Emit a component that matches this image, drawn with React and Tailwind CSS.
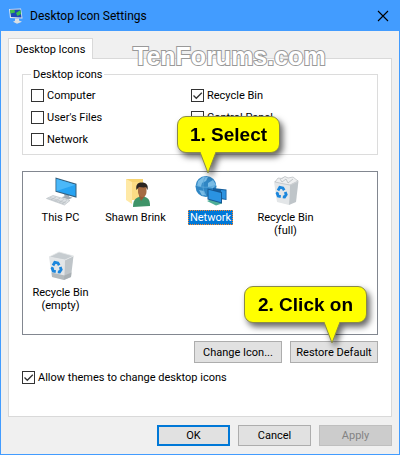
import { useState } from 'react';

function PcIcon() {
    return (
        <svg viewBox="0 0 32 32" className="size-8" aria-hidden="true">
            <path d="M19 17l5 1.500v2l3.500 1.200-4 1.800-7-2.300 3-1z" fill="#a3adb5" />
            <path d="M10.500 1.500l21 6.300v14l-21-6z" fill="#35607f" />
            <path d="M11.500 3l19 5.700v11.600l-19-5.400z" fill="#27a3f2" />
            <path d="M11.500 3l19 5.700-19 6.200z" fill="#4bb8f9" />
            <path d="M1.500 22.500L8 19.500l17 5-5.500 4.500z" fill="#dfe3e6" stroke="#b3babf" strokeWidth=".6" />
            <path d="M5 21.500l16 5.500M3.500 22.500l16 5.500M11 21l-5 2.800M15 22.200l-5 3M19 23.400l-5 3M22 24.500l-5 3" stroke="#b3babf" strokeWidth=".6" />
        </svg>
    );
}

function UserIcon() {
    return (
        <svg viewBox="0 0 32 32" className="size-8" aria-hidden="true">
            <path d="M6 3h17v21H10z" fill="#f7d472" />
            <path d="M6 3l6 3v22l-6-4z" fill="#ffe9a6" />
            <path d="M12 6h10v18H12z" fill="#fbdc85" />
            <path d="M13 31c0-6 2-9 6-10h6c4 1 5 4 5 9z" fill="#3f9468" />
            <path d="M19 20l2 5 4-5v-3h-6z" fill="#945c37" />
            <path d="M18 10h8.500v6c0 3-2 5-4 5s-4.500-2-4.500-5z" fill="#a56b42" />
            <path d="M16.500 14c-1-5 1-7.500 5-7.500 5 0 7 2.500 6 7.500l-1.500-3c-2 1-5 0-7 0z" fill="#2b2522" />
        </svg>
    );
}

function NetworkIcon() {
    return (
        <svg viewBox="0 0 32 32" className="size-8" aria-hidden="true">
            <circle cx="11" cy="10.500" r="10.500" fill="#2f86c4" />
            <path d="M3 5l5-4h5l-2 4-4 2-1 4-4-1zM13 7l5-3 3 5-3 3-5-1zM4 14l5 1 2 4-4 .5z" fill="#79bce6" />
            <path d="M1 9c5 3 14 3 20 0M11 0c-4 5-4 14 0 20" fill="none" stroke="#5aa7d9" strokeWidth=".8" />
            <path d="M12 25l5-2 10 3v1.500l-6 2z" fill="#4fae98" />
            <path d="M18 12l13.500 1.500v10.500L18 22z" fill="#155f9e" />
            <path d="M26 14l4.700.5v8.500L26 22z" fill="#2d93e0" />
            <path d="M12.500 12.500L27 16v11.500L12.500 23.500z" fill="#165893" />
            <path d="M13.500 13.800L26 16.900v9.300l-12.500-3.400z" fill="#2a93e2" />
        </svg>
    );
}

function BinIcon({ full }) {
    return (
        <svg viewBox="0 0 32 32" className="size-8" aria-hidden="true">
            <path d="M4 6l16 3-1 20-12-3z" fill="#e3e6e8" />
            <path d="M20 9l8.500-4-2.500 21-7 3z" fill="#bfc5c9" />
            <path d="M4 6l10-5 14.500 4-8.500 4z" fill="#c6ccd0" stroke="#e6e9ea" strokeWidth=".8" />
            {full ? (
                <>
                    <path d="M5 6l3-4 4 .5 3-2 3 1.500 5-1 5 4-4 2-4 2-8-1.500z" fill="#eeeff0" stroke="#aeb4b8" strokeWidth=".6" />
                    <path d="M10 3l2 3 4-3 2 4 5-4" fill="none" stroke="#aeb4b8" strokeWidth=".7" />
                </>
            ) : (
                <path d="M6.500 21.500l13 3 7-3-.5 4.500-7 3-12-3z" fill="#a0a7ab" opacity=".7" />
            )}
            <g fill="none" stroke="#1b86dc" strokeWidth="2.800">
                <path d="M8 14.500l1.800-3.200 3 .6 1.400 2.400" />
                <path d="M15.200 16l1 2.600-1.600 2.400-1.800-.2" />
                <path d="M10.800 20.600l-2.600-.5-1-2.600.8-1.200" />
            </g>
        </svg>
    );
}

function AppIcon() {
    return (
        <svg viewBox="0 0 16 16" className="size-4" aria-hidden="true">
            <path d="M1 1l12-.5 1.500 10L2 10z" fill="#dfe8ef" />
            <path d="M2 1.800l10.500-.3 1 8L3 9z" fill="#1d49b5" />
            <path d="M2 2l4.500 0 .5 2.500-4.500 1zM8 5l4.500-3 .5 4-3.500 2z" fill="#3fc04a" />
            <path d="M7 10.500h4v2l3 1.200-5 2-4-2 2-1z" fill="#dadfe2" />
        </svg>
    );
}

const icons = [
    { id: 'pc', name: 'This PC', icon: <PcIcon /> },
    { id: 'user', name: 'Shawn Brink', icon: <UserIcon /> },
    { id: 'network', name: 'Network', icon: <NetworkIcon />, hint: '1. Select' },
    { id: 'full', name: 'Recycle Bin (full)', icon: <BinIcon full /> },
    { id: 'empty', name: 'Recycle Bin (empty)', icon: <BinIcon /> },
];

function CheckBox({ label, defaultChecked = false }) {
    return (
        <label className="flex items-center gap-[3px]">
            <span className="grid">
                <input
                    type="checkbox"
                    defaultChecked={defaultChecked}
                    className="peer col-start-1 row-start-1 size-[13px] appearance-none border border-[#333] bg-white"
                />
                <svg viewBox="0 0 13 13" className="pointer-events-none invisible col-start-1 row-start-1 size-[13px] peer-checked:visible" aria-hidden="true">
                    <path d="M2.500 6.500l2.800 2.800 5.500-5.600" fill="none" stroke="#333" strokeWidth="1.300" />
                </svg>
            </span>
            {label}
        </label>
    );
}

// Yellow speech bubble, placed by its parent; the tail hangs left or right of the middle
function Callout({ text, tail, className }) {
    return (
        <span className={`pointer-events-none absolute z-10 flex flex-col drop-shadow-[3px_4px_3px_rgba(0,0,0,0.6)] ${className}`}>
            <span className="flex h-[37px] w-full items-center justify-center rounded-[9px] border border-[#8a8a4a] bg-[#ffff00] text-[19px] font-bold whitespace-nowrap text-black">
                {text}
            </span>
            <svg
                viewBox="0 0 18 22"
                className={`-mt-px h-[22px] w-[18px] ${tail === 'left' ? 'ml-[22px] self-start' : 'mr-[26px] self-end'}`}
                aria-hidden="true"
            >
                <path d="M1 0l8 21 8-21z" fill="#ffff00" />
                <path d="M1 0l8 21 8-21" fill="none" stroke="#8a8a4a" />
            </svg>
        </span>
    );
}

export default function App() {
    const [selected, setSelected] = useState('network');

    return (
        <main className="border border-[#429cff] bg-[#f0f0f0] font-[Roboto,sans-serif] text-[11px] leading-[13px] text-black">
            <header className="flex h-[30px] items-center gap-1.5 bg-[#429cff] pr-2 pl-[7px]">
                <AppIcon />
                <h1 className="flex-1 text-[12px] leading-4">Desktop Icon Settings</h1>
                <button type="button" aria-label="Close" className="p-0.5">
                    <svg viewBox="0 0 12 12" className="size-3" aria-hidden="true">
                        <path d="M1 1l10 10M11 1L1 11" stroke="#000" strokeWidth="1.100" />
                    </svg>
                </button>
            </header>

            <div className="px-[7px] pt-[7px] pb-2">
                <div className="relative flex" role="tablist">
                    <button type="button" role="tab" aria-selected="true" className="relative z-[1] -mb-px h-[21px] w-[85px] border border-b-0 border-[#d9d9d9] bg-white">
                        Desktop Icons
                    </button>
                    <div className="pointer-events-none absolute top-1 left-[125px] z-[2] font-['Liberation_Sans',Arial,sans-serif] text-[25px] leading-7 font-bold text-white [-webkit-text-stroke:2px_#999] [paint-order:stroke_fill]">
                        TenForums.com
                    </div>
                </div>

                <section className="border border-[#d9d9d9] bg-white px-[13px] pt-[9px] pb-8">
                    <fieldset className="border border-[#dcdcdc] px-2 pb-2">
                        <legend className="px-0.5">Desktop icons</legend>
                        <div className="grid grid-cols-[160px_1fr] gap-y-[9px] pt-2">
                            <CheckBox label="Computer" />
                            <CheckBox label="Recycle Bin" defaultChecked />
                            <CheckBox label="User's Files" />
                            <CheckBox label="Control Panel" />
                            <CheckBox label="Network" />
                        </div>
                    </fieldset>

                    <div role="listbox" aria-label="Desktop icons" className="mt-4 flex min-h-[164px] flex-wrap content-start border border-[#828790] pt-1">
                        {icons.map((item) => (
                            <button
                                key={item.id}
                                type="button"
                                role="option"
                                aria-selected={selected === item.id}
                                onClick={() => setSelected(item.id)}
                                className="relative flex h-[75px] w-[75px] flex-col items-center gap-0.5"
                            >
                                {item.icon}
                                <span className={selected === item.id
                                    ? 'border border-dotted border-[#ff8728] bg-[#0078d7] px-px text-white'
                                    : 'border border-transparent px-px'}
                                >
                                    {item.name}
                                </span>
                                {item.hint && (
                                    <Callout
                                        text={item.hint}
                                        tail="left"
                                        className="bottom-full left-1 mb-0.5 w-[103px] font-['Liberation_Sans',Arial,sans-serif]"
                                    />
                                )}
                            </button>
                        ))}
                    </div>

                    <div className="mt-1.5 flex justify-end gap-2">
                        <button type="button" className="h-[22px] w-[88px] border border-[#adadad] bg-[#e1e1e1]">Change Icon...</button>
                        <button type="button" className="relative h-[22px] w-[88px] border border-[#adadad] bg-[#e1e1e1]">
                            Restore Default
                            <Callout
                                text="2. Click on"
                                tail="right"
                                className="right-[10px] bottom-[18px] w-[123px] font-['Liberation_Sans',Arial,sans-serif]"
                            />
                        </button>
                    </div>

                    <div className="mt-2">
                        <CheckBox label="Allow themes to change desktop icons" defaultChecked />
                    </div>
                </section>

                <footer className="mt-2 flex justify-end gap-2">
                    <button type="button" className="h-[21px] w-[73px] border-2 border-[#0078d7] bg-[#e1e1e1]">OK</button>
                    <button type="button" className="h-[21px] w-[73px] border border-[#adadad] bg-[#e1e1e1]">Cancel</button>
                    <button type="button" disabled className="h-[21px] w-[73px] border border-[#bfbfbf] bg-[#cccccc] text-[#838383]">Apply</button>
                </footer>
            </div>
        </main>
    );
}
